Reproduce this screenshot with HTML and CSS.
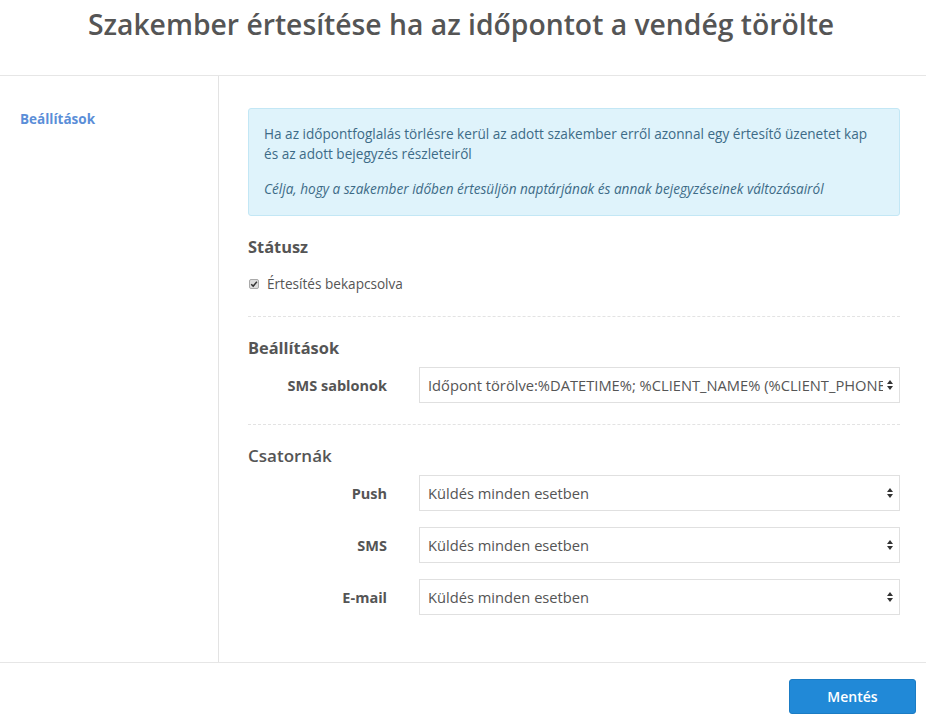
FILE: index.html
```html
<!DOCTYPE html>
<html lang="hu">
<head>
<meta charset="utf-8">
<title>Szakember értesítése</title>
<link rel="stylesheet" href="styles.css">
</head>
<body>
<header class="page-head">
  <h1 class="page-title">Szakember értesítése ha az időpontot a vendég törölte</h1>
</header>
<main class="layout">
  <nav class="sidebar">
    <a class="side-link" href="#">Beállítások</a>
  </nav>
  <section class="content">
    <div class="alert">
      <p>Ha az időpontfoglalás törlésre kerül az adott szakember erről azonnal egy értesítő üzenetet kap és az adott bejegyzés részleteiről</p>
      <p class="alert-em">Célja, hogy a szakember időben értesüljön naptárjának és annak bejegyzéseinek változásairól</p>
    </div>

    <h3 class="sec-title">Státusz</h3>
    <label class="check">
      <span class="check-box"><svg viewBox="0 0 10 10" width="8" height="8"><path d="M1.5 5.2 L4 7.6 L8.6 2.2" fill="none" stroke="#333" stroke-width="1.8"/></svg></span>
      <span class="check-text">Értesítés bekapcsolva</span>
    </label>

    <hr class="dash">

    <h3 class="sec-title">Beállítások</h3>
    <div class="form-row">
      <label class="form-label">SMS sablonok</label>
      <div class="select">
        <span class="select-val">Időpont törölve:%DATETIME%; %CLIENT_NAME% (%CLIENT_PHONE%)</span>
        <svg class="caret" viewBox="0 0 6 10" width="6" height="10"><path d="M3 0 L6 4 H0 Z M3 10 L6 6 H0 Z" fill="#333"/></svg>
      </div>
    </div>

    <hr class="dash">

    <h3 class="sec-title sec-light">Csatornák</h3>
    <div class="form-row">
      <label class="form-label">Push</label>
      <div class="select">
        <span class="select-val">Küldés minden esetben</span>
        <svg class="caret" viewBox="0 0 6 10" width="6" height="10"><path d="M3 0 L6 4 H0 Z M3 10 L6 6 H0 Z" fill="#333"/></svg>
      </div>
    </div>
    <div class="form-row">
      <label class="form-label">SMS</label>
      <div class="select">
        <span class="select-val">Küldés minden esetben</span>
        <svg class="caret" viewBox="0 0 6 10" width="6" height="10"><path d="M3 0 L6 4 H0 Z M3 10 L6 6 H0 Z" fill="#333"/></svg>
      </div>
    </div>
    <div class="form-row">
      <label class="form-label">E-mail</label>
      <div class="select">
        <span class="select-val">Küldés minden esetben</span>
        <svg class="caret" viewBox="0 0 6 10" width="6" height="10"><path d="M3 0 L6 4 H0 Z M3 10 L6 6 H0 Z" fill="#333"/></svg>
      </div>
    </div>
  </section>
</main>
<footer class="page-foot">
  <button class="btn-save" type="button">Mentés</button>
</footer>
</body>
</html>
```
FILE: styles.css
```css
* { box-sizing: border-box; }
html, body { margin: 0; padding: 0; background: #fff; }
body {
  font-family: "Open Sans", "DejaVu Sans", sans-serif;
  color: #555;
  width: 926px;
  height: 718px;
  overflow: hidden;
}
.page-head {
  height: 76px;
  border-bottom: 1px solid #e6e6e6;
  display: flex;
  justify-content: center;
  padding: 4px 4px 0 0;
}
.page-title {
  margin: 0;
  font-size: 28.3px;
  font-weight: 600;
  color: #555;
  letter-spacing: 0;
  line-height: 40px;
}
.layout {
  display: flex;
  height: 587px;
  border-bottom: 1px solid #e6e6e6;
}
.sidebar {
  width: 219px;
  border-right: 1px solid #e3e3e3;
  padding: 31px 0 0 20px;
}
.side-link {
  font-size: 13.5px;
  font-weight: 700;
  color: #5b8ed8;
  text-decoration: none;
}
.content {
  flex: 1;
  padding: 32px 26px 0 29px;
}
.alert {
  background: #dff3fb;
  border: 1px solid #c3e7f5;
  border-radius: 3px;
  padding: 15px 15px 16px 15px;
  color: #3d6b87;
  font-size: 13.6px;
  line-height: 20px;
}
.alert p { margin: 0; }
.alert .alert-em { font-style: italic; margin-top: 15px; }
.sec-title {
  margin: 21px 0 0 0;
  font-size: 16.4px;
  font-weight: 700;
  color: #555;
  line-height: 20px;
}
.sec-light { font-weight: 600; font-size: 17px; }
.check {
  display: flex;
  align-items: center;
  gap: 8px;
  margin: 17px 0 0 1px;
  font-size: 13.6px;
  color: #555;
}
.check-box {
  width: 10px;
  height: 10px;
  border: 1px solid #aaa;
  background: #ddd;
  border-radius: 2px;
  display: flex;
  align-items: center;
  justify-content: center;
}
.dash {
  border: 0;
  border-top: 1px dashed #e3e3e3;
  margin: 23px 0 0 0;
  height: 0;
}
.form-row + .dash { margin-top: 21px; }
.form-row {
  display: grid;
  grid-template-columns: 139px 1fr;
  column-gap: 32px;
  align-items: center;
  margin-top: 9px;
}
.form-row + .form-row { margin-top: 16px; }
.form-label {
  text-align: right;
  font-size: 14.5px;
  font-weight: 700;
  color: #555;
}
.select {
  position: relative;
  height: 36px;
  border: 1px solid #e0e0e0;
  background: #fff;
  display: flex;
  align-items: center;
  padding: 0 16px 0 8px;
  overflow: hidden;
}
.select-val {
  font-size: 14.7px;
  color: #555;
  white-space: nowrap;
  overflow: hidden;
}
.caret {
  position: absolute;
  right: 6px;
  top: 12px;
}
.page-foot {
  display: flex;
  justify-content: flex-end;
  padding: 16px 10px 0 0;
}
.btn-save {
  width: 127px;
  height: 35px;
  border: 1px solid #1b7cc4;
  border-radius: 3px;
  background: #2189d7;
  color: #fff;
  font-family: "Open Sans", sans-serif;
  font-size: 14px;
  font-weight: 600;
}
```
